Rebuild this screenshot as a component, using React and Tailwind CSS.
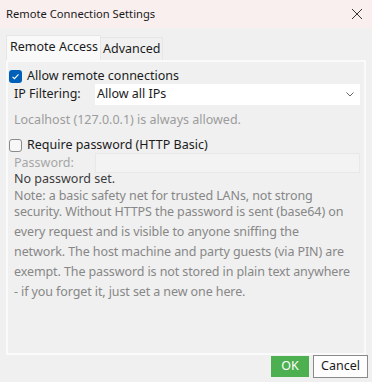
import React from 'react';

const font = { fontFamily: '"Noto Sans", "Open Sans", sans-serif' };

const Check = ({ checked }) =>
  checked ? (
    <span className="flex h-[13px] w-[13px] shrink-0 items-center justify-center rounded-[3px] bg-[#005fb8]">
      <svg width="9" height="9" viewBox="0 0 9 9" fill="none">
        <path d="M1.5 4.8 L3.5 6.7 L7.5 2.3" stroke="white" strokeWidth="1.1" />
      </svg>
    </span>
  ) : (
    <span className="h-[13px] w-[13px] shrink-0 rounded-[3px] border border-[#8a8a8a] bg-[#f7f7f7]" />
  );

const App = () => {
  return (
    <div className="flex h-[382px] w-[372px] flex-col bg-[#f0f0f0] text-[12.5px] text-[#1b1b1b]" style={font}>
      <div className="flex h-[28px] items-center justify-between bg-[#f9efef] pl-[6px] pr-[9px] text-[11.2px] text-[#1a1a1a]">
        <span>Remote Connection Settings</span>
        <svg width="12" height="12" viewBox="0 0 12 12" fill="none">
          <path d="M1 1 L11 11 M11 1 L1 11" stroke="#333" strokeWidth="1" />
        </svg>
      </div>

      <div className="mt-[7px] flex items-end whitespace-nowrap pl-[6px]">
        <div className="flex h-[25px] w-[95px] items-center border border-b-0 border-[#e6e6e6] bg-[#f9f9f9] pb-[2px] pl-[3px]">
          Remote Access
        </div>
        <div className="flex h-[23px] w-[62px] items-center border border-b-0 border-l-0 border-[#e6e6e6] pl-[2px]">
          Advanced
        </div>
      </div>

      <div className="mx-[6px] flex h-[295px] flex-col border-2 border-[#fafafa] pr-[4px]">
        <label className="mt-[6px] flex h-[16px] items-center gap-[5px] pl-[1px]">
          <Check checked />
          <span>Allow remote connections</span>
        </label>
        <div className="flex h-[21px] items-center pl-[6px]">
          <span className="w-[81px]">IP Filtering:</span>
          <div className="flex h-[21px] flex-1 items-center justify-between bg-white pl-[2px] pr-[6px]">
            <span>Allow all IPs</span>
            <svg width="8" height="5" viewBox="0 0 8 5" fill="none">
              <path d="M0.5 0.5 L4 4 L7.5 0.5" stroke="#666" strokeWidth="1" />
            </svg>
          </div>
        </div>
        <p className="mt-[6px] h-[18px] pl-[6px] leading-[18px] text-[#9c9c9c]">Localhost (127.0.0.1) is always allowed.</p>
        <label className="mt-[8px] flex h-[16px] items-center gap-[5px] pl-[1px]">
          <Check />
          <span>Require password (HTTP Basic)</span>
        </label>
        <div className="flex h-[20px] items-center pl-[6px]">
          <span className="w-[81px] text-[#a6a6a6]">Password:</span>
          <div className="h-[20px] flex-1 border border-[#e8e8e8] bg-[#f3f3f3]" />
        </div>
        <p className="h-[12px] whitespace-nowrap pl-[6px] leading-[12px] text-[#3c3c3c]">No password set.</p>
        <div className="whitespace-nowrap pl-[6px] tracking-[-0.1px] text-[#878787]">
          <p className="mt-[4px] leading-[13px]">Note: a basic safety net for trusted LANs, not strong</p>
          <p className="leading-[20px]">
            security. Without HTTPS the password is sent (base64) on
            <br />
            every request and is visible to anyone sniffing the
            <br />
            network. The host machine and party guests (via PIN) are
            <br />
            exempt. The password is not stored in plain text anywhere
            <br />- if you forget it, just set a new one here.
          </p>
        </div>
      </div>

      <div className="flex justify-end gap-[4px] pr-[4px]">
        <button className="mt-[1px] h-[21px] w-[38px] bg-[#4caf50] text-white">OK</button>
        <button className="h-[23px] w-[55px] border border-[#8a8a8a] bg-[#fdfdfd]">Cancel</button>
      </div>
    </div>
  );
};

export default App;
